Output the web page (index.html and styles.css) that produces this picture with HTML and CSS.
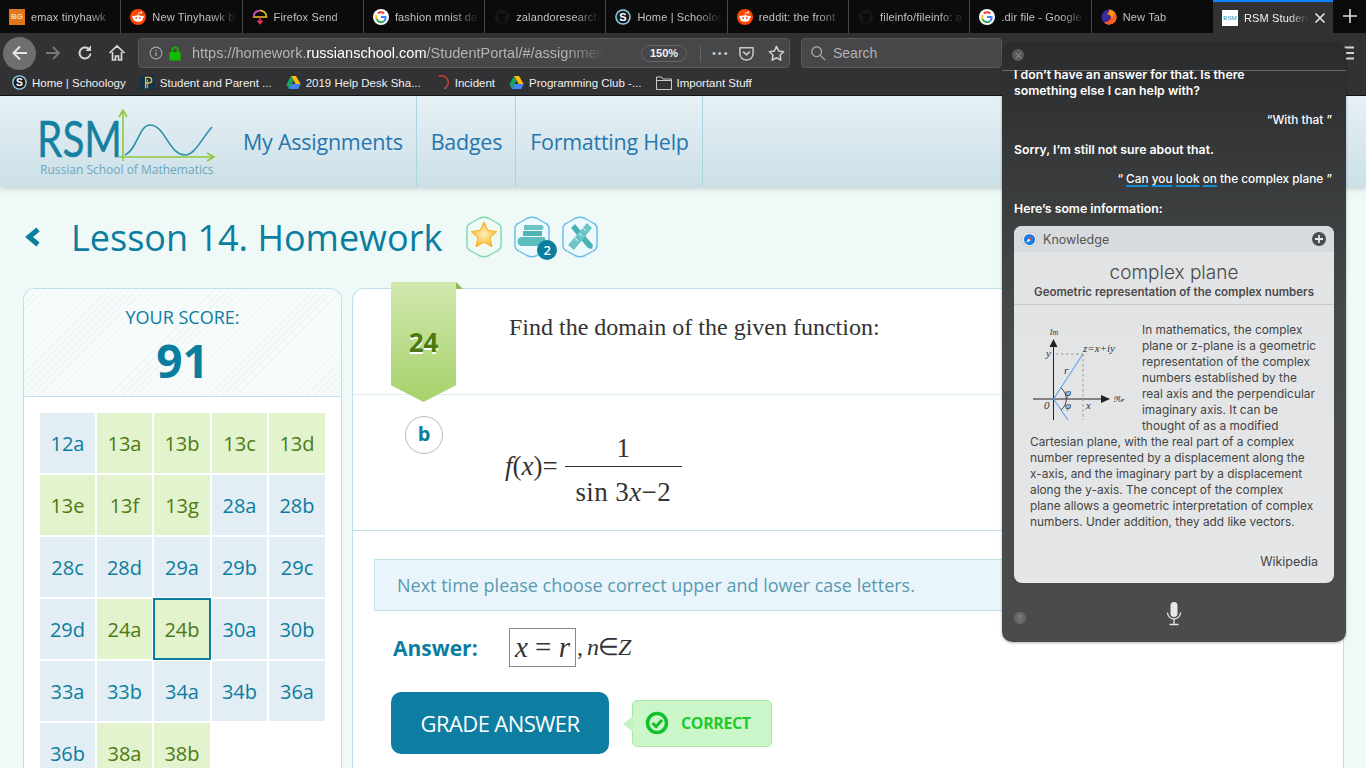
FILE: index.html
```html
<!DOCTYPE html>
<html lang="en">

<head>
    <meta charset="UTF-8">
    <title>RSM Student Portal</title>
    <link rel="stylesheet" href="styles.css">
</head>

<body>
    <svg class="defs" width="0" height="0">
        <symbol id="ico-google" viewBox="0 0 16 16">
            <circle cx="8" cy="8" r="8" fill="#fff"/>
            <path d="M8 3.2a4.8 4.8 0 0 1 3.2 1.2" fill="none" stroke="#ea4335" stroke-width="2"/>
            <path d="M4.8 4.4A4.8 4.8 0 0 1 8 3.2" fill="none" stroke="#ea4335" stroke-width="2"/>
            <path d="M3.6 10A4.8 4.8 0 0 1 3.6 6" fill="none" stroke="#fbbc05" stroke-width="2"/>
            <path d="M3.6 10a4.8 4.8 0 0 0 7.6 2" fill="none" stroke="#34a853" stroke-width="2"/>
            <path d="M8 8h4.6a4.8 4.8 0 0 1-1.4 4" fill="none" stroke="#4285f4" stroke-width="2"/>
        </symbol>
        <symbol id="ico-reddit" viewBox="0 0 16 16">
            <circle cx="8" cy="8" r="8" fill="#ff4500"/>
            <ellipse cx="8" cy="9.5" rx="4.8" ry="3.3" fill="#fff"/>
            <circle cx="3.4" cy="8" r="1.2" fill="#fff"/>
            <circle cx="12.6" cy="8" r="1.2" fill="#fff"/>
            <circle cx="11.2" cy="3.6" r="1" fill="#fff"/>
            <path d="M8 6.4 8.6 3.6l2.4.2" fill="none" stroke="#fff" stroke-width=".7"/>
            <circle cx="6.2" cy="9" r=".9" fill="#ff4500"/>
            <circle cx="9.8" cy="9" r=".9" fill="#ff4500"/>
        </symbol>
        <symbol id="ico-github" viewBox="0 0 16 16">
            <circle cx="8" cy="8" r="7.5" fill="#161616"/>
            <path d="M4.5 5 5 3.6l1.8.8h2.4L11 3.6l.5 1.4c.6 1.5.3 3.2-1.3 3.8.4.4.5 1 .5 2v3H5.300v-3c0-1 .1-1.600.5-2C4.200 8.200 3.900 6.500 4.500 5z" fill="#0b0b0b"/>
        </symbol>
        <symbol id="ico-schoology" viewBox="0 0 16 16">
            <circle cx="8" cy="8" r="7.800" fill="#8fd3ee"/>
            <circle cx="8" cy="8" r="6.300" fill="#1a1a1c"/>
            <text x="8" y="11.600" text-anchor="middle" class="ico-s">S</text>
        </symbol>
        <symbol id="ico-drive" viewBox="0 0 16 14">
            <path d="M5.300 0h5.400l5 8.700h-5.400z" fill="#fbbc05"/>
            <path d="M5.300 0 .3 9.200 3 14l5-8.800z" fill="#1aa260"/>
            <path d="M3 14h10.200l2.500-5.300H5.800z" fill="#4285f4"/>
        </symbol>
    </svg>

    <div class="tabbar">
        <div class="tab">
            <span class="favicon fav-bg">BG</span>
            <span class="tab-title">emax tinyhawk</span>
        </div>
        <div class="tab">
            <svg class="favicon"><use href="#ico-reddit"/></svg>
            <span class="tab-title">New Tinyhawk bl</span>
        </div>
        <div class="tab">
            <svg class="favicon" viewBox="0 0 16 16">
                <path d="M1.500 8a6.500 6.500 0 0 1 13 0z" fill="none" stroke="#f5c518" stroke-width="1.600"/>
                <path d="M1.500 8a6.500 6.500 0 0 1 6.500-6.500" fill="none" stroke="#c13adf" stroke-width="1.600"/>
                <path d="M8 8v6M5.500 11.500 8 14.500l2.500-3" fill="none" stroke="#f0325c" stroke-width="1.600"/>
            </svg>
            <span class="tab-title">Firefox Send</span>
        </div>
        <div class="tab">
            <svg class="favicon"><use href="#ico-google"/></svg>
            <span class="tab-title">fashion mnist da</span>
        </div>
        <div class="tab">
            <svg class="favicon"><use href="#ico-github"/></svg>
            <span class="tab-title">zalandoresearch</span>
        </div>
        <div class="tab">
            <svg class="favicon"><use href="#ico-schoology"/></svg>
            <span class="tab-title">Home | Schoolog</span>
        </div>
        <div class="tab">
            <svg class="favicon"><use href="#ico-reddit"/></svg>
            <span class="tab-title">reddit: the front</span>
        </div>
        <div class="tab">
            <svg class="favicon"><use href="#ico-github"/></svg>
            <span class="tab-title">fileinfo/fileinfo: a</span>
        </div>
        <div class="tab">
            <svg class="favicon"><use href="#ico-google"/></svg>
            <span class="tab-title">.dir file - Google</span>
        </div>
        <div class="tab">
            <svg class="favicon" viewBox="0 0 16 16">
                <circle cx="8" cy="8" r="7.500" fill="#3b2a9c"/>
                <path d="M8 .5a7.500 7.500 0 0 1 7.500 7.500A7.500 7.500 0 0 1 3 13.600C6 14 10 12 10 8.500 10 6 8 5 6 5.500 7 3.500 8.500 3 8 .5z" fill="#ff9500"/>
                <path d="M15.500 8A7.500 7.500 0 0 1 3 13.600c3 .2 6-1.500 7-5 2 0 3-1.500 2.500-4 1.800.9 3 1.800 3 3.400z" fill="#ff5a1f"/>
            </svg>
            <span class="tab-title">New Tab</span>
        </div>
        <div class="tab tab-active">
            <span class="favicon fav-rsm">RSM</span>
            <span class="tab-title">RSM Student</span>
            <svg class="tab-close" viewBox="0 0 12 12"><path d="M1.500 1.500l9 9M10.500 1.500l-9 9" stroke="#eee" stroke-width="1.500"/></svg>
        </div>
        <svg class="tab-new" viewBox="0 0 14 14"><path d="M7 0v14M0 7h14" stroke="#ddd" stroke-width="1.600"/></svg>
    </div>

    <div class="navbar">
        <div class="back-btn">
            <svg viewBox="0 0 18 18"><path d="M16 9H3M9 2.500 2.500 9 9 15.500" fill="none" stroke="#e4e4e4" stroke-width="2"/></svg>
        </div>
        <svg class="nav-ico nav-fwd" viewBox="0 0 18 18"><path d="M2 9h13M9 3l6 6-6 6" fill="none" stroke="#77777a" stroke-width="1.800"/></svg>
        <svg class="nav-ico" viewBox="0 0 18 18"><path d="M14.500 9.500A5.500 5.500 0 1 1 12.500 4.700" fill="none" stroke="#d8d8d8" stroke-width="2"/><path d="M15 1.500v5.500H9.500z" fill="#d8d8d8"/></svg>
        <svg class="nav-ico" viewBox="0 0 18 18"><path d="M1.500 9 9 2l7.500 7M4.500 8v8h3v-4h3v4h3V8" fill="none" stroke="#d8d8d8" stroke-width="1.700"/></svg>
        <div class="urlbar">
            <svg class="url-info" viewBox="0 0 16 16"><circle cx="8" cy="8" r="6.700" fill="none" stroke="#a9a9ab" stroke-width="1.200"/><path d="M8 7v4.500M8 4.200v1.400" stroke="#a9a9ab" stroke-width="1.500"/></svg>
            <svg class="url-lock" viewBox="0 0 12 16"><path d="M3 7V4.500a3 3 0 0 1 6 0V7" fill="none" stroke="#12bc00" stroke-width="1.800"/><rect y="6.500" width="12" height="9" rx="1" fill="#12bc00"/></svg>
            <span class="url-text">https://homework.<b>russianschool.com</b>/StudentPortal/#/assignments</span>
            <span class="zoom-pill">150%</span>
            <span class="url-sep"></span>
            <span class="url-dots">•••</span>
            <svg class="url-ico" viewBox="0 0 18 18"><path d="M2 3h14v6a7 7 0 0 1-14 0z" fill="none" stroke="#c8c8c8" stroke-width="1.600" stroke-linejoin="round"/><path d="M5.500 7 9 10.500 12.500 7" fill="none" stroke="#c8c8c8" stroke-width="1.800"/></svg>
            <svg class="url-ico" viewBox="0 0 18 18"><path d="M9 1.500l2.300 4.900 5.200.7-3.800 3.700.9 5.300L9 13.500l-4.600 2.600.9-5.300L1.500 7.100l5.200-.7z" fill="none" stroke="#d0d0d0" stroke-width="1.600" stroke-linejoin="round"/></svg>
        </div>
        <div class="searchbar">
            <svg viewBox="0 0 18 18"><circle cx="7.500" cy="7.500" r="5.500" fill="none" stroke="#a5a5a7" stroke-width="1.500"/><path d="M11.500 11.500 17 17" stroke="#a5a5a7" stroke-width="1.500"/></svg>
            <span>Search</span>
        </div>
        <svg class="hamburger" viewBox="0 0 10 14"><path d="M0 1.500h10M0 7h10M0 12.500h10" stroke="#d5d5d5" stroke-width="2"/></svg>
    </div>

    <div class="bookmarks">
        <div class="bm">
            <svg class="bm-ico"><use href="#ico-schoology"/></svg>
            <span>Home | Schoology</span>
        </div>
        <div class="bm">
            <svg class="bm-ico" viewBox="0 0 16 16">
                <rect width="16" height="16" fill="#173447"/>
                <path d="M6 14V2.500h3.500a3 3 0 0 1 0 6H6" fill="none" stroke="#e8b93a" stroke-width="1.400"/>
                <path d="M8 14V5" stroke="#4fc0c8" stroke-width="1.200"/>
            </svg>
            <span>Student and Parent ...</span>
        </div>
        <div class="bm">
            <svg class="bm-ico bm-drive"><use href="#ico-drive"/></svg>
            <span>2019 Help Desk Sha...</span>
        </div>
        <div class="bm">
            <svg class="bm-ico" viewBox="0 0 16 16"><path d="M4 1.500a6.700 6.700 0 0 1 6 13" fill="none" stroke="#d6402c" stroke-width="1.500"/><path d="M10 14.500a6.700 6.700 0 0 0 2-1.300" fill="none" stroke="#2f8f9c" stroke-width="1.500"/></svg>
            <span>Incident</span>
        </div>
        <div class="bm">
            <svg class="bm-ico bm-drive"><use href="#ico-drive"/></svg>
            <span>Programming Club -...</span>
        </div>
        <div class="bm">
            <svg class="bm-ico bm-folder" viewBox="0 0 16 14"><path d="M.5 13.500V1h5l1.500 2h8.500v10.500zM.5 4.500h15" fill="none" stroke="#c9c9c9"/></svg>
            <span>Important Stuff</span>
        </div>
    </div>

    <header class="site-header">
        <div class="logo">
            <svg class="logo-mark" viewBox="0 0 180 54">
                <path d="M86 53V3M82 9l4-7 4 7" fill="none" stroke="#93c83e" stroke-width="1.600"/>
                <path d="M82 49h94M170 45l7 4-7 4" fill="none" stroke="#93c83e" stroke-width="1.600"/>
                <path d="M88 47C100 42 102 17 113 17 128 17 132 47 148 47 158 47 165 30 175 19" fill="none" stroke="#2f8fae" stroke-width="1.600"/>
                <text x="0" y="49" class="logo-rsm" textLength="85" lengthAdjust="spacingAndGlyphs">RSM</text>
            </svg>
            <div class="logo-sub">Russian School of Mathematics</div>
        </div>
        <nav class="main-nav">
            <a>My Assignments</a>
            <a>Badges</a>
            <a>Formatting Help</a>
        </nav>
    </header>

    <div class="title-row">
        <svg class="title-back" viewBox="0 0 16 20"><path d="M13 2.500 4 10l9 7.500" fill="none" stroke="#0b7d9f" stroke-width="5"/></svg>
        <h1>Lesson 14. Homework</h1>
        <div class="badges">
            <svg class="badge" viewBox="0 0 38 44">
                <path d="M14 3.500Q19 1 24 3.500L33 8.500Q36 10 36 14V30Q36 34 33 35.500L24 40.500Q19 43 14 40.500L5 35.500Q2 34 2 30V14Q2 10 5 8.500Z" fill="#f0faf5" stroke="#7fd8ae" stroke-width="1.400"/>
                <defs><radialGradient id="star"><stop offset="0" stop-color="#fff2b8"/><stop offset="1" stop-color="#f8b62c"/></radialGradient></defs>
                <path d="M19 7l3.900 8.300 9.100 1.200-6.700 6.300 1.700 9L19 27.300l-8 4.500 1.700-9L6 16.500l9.100-1.200z" fill="url(#star)" stroke="#f5b335" stroke-linejoin="round"/>
            </svg>
            <div class="badge-wrap">
                <svg class="badge" viewBox="0 0 38 44">
                    <path d="M14 3.500Q19 1 24 3.500L33 8.500Q36 10 36 14V30Q36 34 33 35.500L24 40.500Q19 43 14 40.500L5 35.500Q2 34 2 30V14Q2 10 5 8.500Z" fill="#eef9fb" stroke="#66bde6" stroke-width="1.400"/>
                    <path d="M11 10h17a2 2 0 0 1 0 5H11z" fill="#6cc3c6"/>
                    <path d="M10 16h19v5H10z" fill="#4fb2b6"/>
                    <path d="M9 22h21a2.500 2.500 0 0 1 0 5v4H9a4 4 0 0 1 0-9z" fill="#5dbcbe"/>
                </svg>
                <span class="badge-count">2</span>
            </div>
            <svg class="badge" viewBox="0 0 38 44">
                <path d="M14 3.500Q19 1 24 3.500L33 8.500Q36 10 36 14V30Q36 34 33 35.500L24 40.500Q19 43 14 40.500L5 35.500Q2 34 2 30V14Q2 10 5 8.500Z" fill="#eef9fb" stroke="#66bde6" stroke-width="1.400"/>
                <path d="M10 13l4-4 18 21-1 4-4-1z" fill="#4ab2b6"/>
                <path d="M26 8l5 5-18 22-6-5z" fill="#6dc5c8"/>
                <path d="M22 13l3 3M18 18l3 3M14 23l3 3" stroke="#eef9fb"/>
            </svg>
        </div>
    </div>

    <div class="columns">
        <aside class="score-card">
            <div class="score-head">
                <div class="score-label">YOUR SCORE:</div>
                <div class="score-value">91</div>
            </div>
            <div class="problem-grid">
                <a class="cell">12a</a>
                <a class="cell done">13a</a>
                <a class="cell done">13b</a>
                <a class="cell done">13c</a>
                <a class="cell done">13d</a>
                <a class="cell done">13e</a>
                <a class="cell done">13f</a>
                <a class="cell done">13g</a>
                <a class="cell">28a</a>
                <a class="cell">28b</a>
                <a class="cell">28c</a>
                <a class="cell">28d</a>
                <a class="cell">29a</a>
                <a class="cell">29b</a>
                <a class="cell">29c</a>
                <a class="cell">29d</a>
                <a class="cell done">24a</a>
                <a class="cell done current">24b</a>
                <a class="cell">30a</a>
                <a class="cell">30b</a>
                <a class="cell">33a</a>
                <a class="cell">33b</a>
                <a class="cell">34a</a>
                <a class="cell">34b</a>
                <a class="cell">36a</a>
                <a class="cell">36b</a>
                <a class="cell done">38a</a>
                <a class="cell done">38b</a>
            </div>
        </aside>

        <main class="problem-card">
            <div class="ribbon-wrap">
                <span class="ribbon-fold"></span>
                <div class="ribbon"><span>24</span></div>
            </div>
            <section class="question">Find the domain of the given function:</section>
            <section class="formula">
                <div class="part-mark">b</div>
                <div class="math">
                    <span class="math-lhs"><i>f</i>(<i>x</i>)=</span>
                    <span class="frac">
                        <span class="frac-top">1</span>
                        <span class="frac-bot">sin 3<i>x</i>−2</span>
                    </span>
                </div>
            </section>
            <section class="answer-area">
                <div class="hint">Next time please choose correct upper and lower case letters.</div>
                <div class="answer-row">
                    <span class="answer-label">Answer:</span>
                    <span class="answer-box"><i>x</i> = <i>r</i></span>
                    <span class="answer-rest">, <i>n</i>∈<i>Z</i></span>
                </div>
                <div class="grade-row">
                    <button class="grade-btn">GRADE ANSWER</button>
                    <div class="correct">
                        <svg viewBox="0 0 24 24"><circle cx="12" cy="12" r="9.500" fill="none" stroke="#10c02c" stroke-width="3.500"/><path d="M7.500 12l3.500 3.500 6-6.500" fill="none" stroke="#10c02c" stroke-width="3"/></svg>
                        <span>CORRECT</span>
                    </div>
                </div>
            </section>
        </main>
    </div>

    <div class="siri">
        <div class="siri-top">
            <span class="siri-close">
                <svg viewBox="0 0 8 8"><path d="M1 1l6 6M7 1 1 7" stroke="#a5a5a5"/></svg>
            </span>
        </div>
        <div class="siri-body">
            <p class="siri-say siri-first">I don’t have an answer for that. Is there something else I can help with?</p>
            <p class="siri-you">“With that ”</p>
            <p class="siri-say">Sorry, I’m still not sure about that.</p>
            <p class="siri-you">“ <u>Can</u> <u>you</u> <u>look</u> <u>on</u> the complex plane ”</p>
            <p class="siri-say siri-last">Here’s some information:</p>

            <div class="know-card">
                <div class="know-head">
                    <svg class="safari" viewBox="0 0 16 16">
                        <circle cx="8" cy="8" r="7.500" fill="#fff" stroke="#aaa" stroke-width=".6"/>
                        <circle cx="8" cy="8" r="6" fill="#1b7fe0"/>
                        <path d="M11.500 4.500 7 7l2 2z" fill="#ee3b30"/>
                        <path d="M4.500 11.500 7 7l2 2z" fill="#fff"/>
                    </svg>
                    <span class="know-title">Knowledge</span>
                    <svg class="know-plus" viewBox="0 0 14 14"><circle cx="7" cy="7" r="7" fill="#4b4d4f"/><path d="M7 3v8M3 7h8" stroke="#e6e7e8" stroke-width="1.800"/></svg>
                </div>
                <div class="know-name">
                    <h2>complex plane</h2>
                    <h3>Geometric representation of the complex numbers</h3>
                </div>
                <div class="know-text">
                    <svg class="plane-fig" viewBox="0 0 100 104">
                        <path d="M23.500 98V24" stroke="#222" stroke-width="1"/>
                        <path d="M23.500 17l-4 8h8z" fill="#222"/>
                        <path d="M3 77h69" stroke="#222" stroke-width="1"/>
                        <path d="M80 77l-9-4v8z" fill="#222"/>
                        <path d="M23.500 77 53 32M23.500 77 38 98" stroke="#6aa5ec" stroke-width="1.200" fill="none"/>
                        <path d="M26 32h27M53 32v66" stroke="#999" stroke-dasharray="2.500 2.500" fill="none"/>
                        <path d="M31 66a14 14 0 0 1 0 22" stroke="#444" fill="none"/>
                        <text x="24" y="13" class="fig-lab fig-small" text-anchor="middle">Im</text>
                        <text x="53" y="30" class="fig-lab">z=x+iy</text>
                        <text x="16" y="35" class="fig-lab">y</text>
                        <text x="34" y="52" class="fig-lab">r</text>
                        <text x="35" y="74" class="fig-lab">φ</text>
                        <text x="35" y="87" class="fig-lab">φ</text>
                        <text x="14" y="87" class="fig-lab">0</text>
                        <text x="56" y="87" class="fig-lab">x</text>
                        <text x="83" y="80" class="fig-lab fig-small">ℜℯ</text>
                    </svg>
                    In mathematics, the complex plane or z-plane is a geometric representation of the complex numbers established by the real axis and the perpendicular imaginary axis. It can be thought of as a modified Cartesian plane, with the real part of a complex number represented by a displacement along the <span class="nowrap">x-axis,</span> and the imaginary part by a displacement along the <span class="nowrap">y-axis.</span> The concept of the complex<br>plane allows a geometric interpretation of complex numbers. Under addition, they add like vectors.
                </div>
                <div class="know-src">Wikipedia</div>
            </div>
        </div>
        <div class="siri-foot">
            <span class="siri-help">?</span>
            <svg class="siri-mic" viewBox="0 0 16 24">
                <rect x="4.500" y="0" width="7" height="15" rx="3.500" fill="#e8e8e8"/>
                <path d="M1.500 10.500a6.500 6.500 0 0 0 13 0M8 17v5M3.500 22.500h9" fill="none" stroke="#e8e8e8" stroke-width="1.300"/>
            </svg>
        </div>
    </div>
</body>

</html>
```

FILE: styles.css
```css
* {
    box-sizing: border-box;
}

html,
body {
    height: 768px;
    overflow: hidden;
}

body {
    margin: 0;
    background-color: #eff9f8;
    font-family: "Open Sans", "Liberation Sans", sans-serif;
    color: #0b7d9f;
}

.defs {
    display: block;
    height: 0;
}

.ico-s {
    font: bold 11px "Liberation Sans", sans-serif;
    fill: #fff;
}

/* browser tabs */
.tabbar {
    display: flex;
    align-items: stretch;
    height: 33px;
    background-color: #0b0b0c;
    font-family: "Liberation Sans", sans-serif;
    font-size: 11px;
    letter-spacing: 0.15px;
}

.tab {
    display: flex;
    align-items: center;
    gap: 6px;
    width: 121.3px;
    padding: 0 5px 0 9px;
    margin: 0;
    border-right: 1px solid #4a4a4c;
    color: #c2c2c4;
    white-space: nowrap;
}

.tab:nth-child(10) {
    border-right: none;
}

.favicon {
    flex: none;
    width: 16px;
    height: 16px;
}

.fav-bg {
    background-color: #e2761b;
    color: #f6d9b6;
    font-size: 8px;
    font-weight: bold;
    letter-spacing: 0;
    line-height: 16px;
    text-align: center;
}

.fav-rsm {
    background-color: #fff;
    color: #1b86a8;
    font-family: "Liberation Serif", serif;
    font-size: 6.500px;
    letter-spacing: 0;
    line-height: 16px;
    text-align: center;
}

.tab-title {
    flex: 1;
    overflow: hidden;
    -webkit-mask-image: linear-gradient(to right, #000 70%, transparent 100%);
    mask-image: linear-gradient(to right, #000 70%, transparent 100%);
}

.tab-active {
    width: 120px;
    padding-left: 9px;
    background-color: #323234;
    border-top: 2px solid #0a84ff;
    border-right: none;
    color: #f2f2f2;
}

.tab-close {
    flex: none;
    width: 12px;
    height: 12px;
    margin-right: 2px;
}

.tab-new {
    width: 14px;
    height: 14px;
    margin: 9px 0 0 10px;
}

/* browser toolbar */
.navbar {
    display: flex;
    align-items: center;
    height: 36px;
    padding: 4px 0 0 3px;
    background-color: #323234;
    font-family: "Liberation Sans", sans-serif;
}

.back-btn {
    display: flex;
    align-items: center;
    justify-content: center;
    flex: none;
    width: 33px;
    height: 33px;
    border-radius: 50%;
    background-color: #6f6f71;
}

.back-btn svg {
    width: 18px;
    height: 18px;
}

.nav-ico {
    flex: none;
    width: 18px;
    height: 18px;
    margin-left: 14px;
}

.nav-fwd {
    margin-left: 8px;
}

.urlbar {
    display: flex;
    align-items: center;
    flex: none;
    width: 652px;
    height: 30px;
    margin-left: 12px;
    padding: 0 5px 0 10px;
    background-color: #474749;
    border: 1px solid #5a5a5c;
    border-radius: 4px;
}

.url-info {
    flex: none;
    width: 14px;
    height: 14px;
}

.url-lock {
    flex: none;
    width: 12px;
    height: 15px;
    margin-left: 6px;
}

.url-text {
    flex: none;
    width: 414px;
    margin-left: 11px;
    overflow: hidden;
    color: #b4b4b6;
    font-size: 14.500px;
    white-space: nowrap;
    -webkit-mask-image: linear-gradient(to right, #000 90%, transparent 100%);
    mask-image: linear-gradient(to right, #000 90%, transparent 100%);
}

.url-text b {
    color: #fff;
    font-weight: normal;
}

.zoom-pill {
    flex: none;
    width: 46px;
    height: 17px;
    margin-left: 35px;
    border: 1px solid #666;
    border-radius: 9px;
    color: #f0f0f0;
    font-size: 11px;
    font-weight: bold;
    line-height: 15px;
    text-align: center;
}

.url-sep {
    flex: none;
    width: 1px;
    height: 17px;
    margin-left: 13px;
    background-color: #646466;
}

.url-dots {
    flex: none;
    margin: 0 -5px 0 11px;
    color: #c8c8c8;
    font-size: 11px;
    letter-spacing: 2px;
}

.url-ico {
    flex: none;
    width: 17px;
    height: 17px;
    margin-left: 13px;
}

.searchbar {
    display: flex;
    align-items: center;
    gap: 7px;
    flex: none;
    width: 201px;
    height: 30px;
    margin-left: 11px;
    padding-left: 8px;
    background-color: #474749;
    border: 1px solid #5a5a5c;
    border-radius: 4px;
    color: #b0b0b2;
    font-size: 14px;
}

.searchbar svg {
    width: 16px;
    height: 16px;
}

.hamburger {
    flex: none;
    width: 10px;
    height: 14px;
    margin-left: 342px;
}

/* bookmarks */
.bookmarks {
    display: flex;
    align-items: center;
    gap: 14px;
    height: 27px;
    padding: 1px 0 0 12px;
    background-color: #323234;
    border-bottom: 1px solid #0c0c0c;
    color: #f0f0f0;
    font-family: "Liberation Sans", sans-serif;
    font-size: 11.5px;
    white-space: nowrap;
}

.bm {
    display: flex;
    align-items: center;
    gap: 5px;
}

.bm-ico {
    flex: none;
    width: 15px;
    height: 15px;
}

.bm-drive {
    height: 13px;
}

.bm-folder {
    width: 16px;
    height: 14px;
}

/* site header */
.site-header {
    display: flex;
    height: 90px;
    padding-left: 37px;
    background: linear-gradient(#e6f1f5, #cce0e8);
    box-shadow: 0 2px 6px rgba(90, 120, 130, 0.35);
}

.logo {
    flex: none;
    width: 206px;
    padding-top: 12px;
}

.logo-mark {
    display: block;
    width: 180px;
    height: 54px;
}

.logo-rsm {
    font-family: "Lato", sans-serif;
    font-size: 50px;
    fill: #15809f;
    stroke: #15809f;
    stroke-width: 0.4px;
}

.logo-sub {
    margin: 0 0 0 3px;
    color: #6ea6bb;
    font-size: 12px;
    line-height: 16px;
    white-space: nowrap;
}

.main-nav {
    display: flex;
}

.main-nav a {
    display: flex;
    align-items: center;
    height: 90px;
    padding: 0 13px 0 14px;
    border-right: 1px solid #a9d4e0;
    color: #2776ad;
    font-size: 21.500px;
    letter-spacing: -0.25px;
}

.main-nav a:first-child {
    padding-left: 0;
}

/* title */
.title-row {
    display: flex;
    align-items: center;
    height: 102px;
    padding-left: 25px;
}

.title-back {
    flex: none;
    width: 16px;
    height: 20px;
}

h1 {
    margin: 0 0 0 30px;
    color: #0b7d9f;
    font-size: 36px;
    font-weight: 400;
    white-space: nowrap;
}

.badges {
    display: flex;
    align-items: center;
    gap: 10px;
    margin-left: 23px;
}

.badge {
    display: block;
    width: 38px;
    height: 44px;
}

.badge-wrap {
    position: relative;
}

.badge-count {
    position: absolute;
    right: -6px;
    bottom: -1px;
    width: 20px;
    height: 20px;
    border-radius: 50%;
    background-color: #0b7d9f;
    color: #fff;
    font-size: 13px;
    font-weight: 600;
    line-height: 20px;
    text-align: center;
}

/* two columns */
.columns {
    display: flex;
    align-items: flex-start;
    gap: 10px;
    padding-left: 23px;
}

.score-card {
    flex: none;
    width: 319px;
    height: 480px;
    background-color: #fff;
    border: 1px solid #bfe0ea;
    border-bottom: none;
    border-radius: 12px 12px 0 0;
    overflow: hidden;
}

.score-head {
    height: 108px;
    padding-top: 15px;
    border-bottom: 1px solid #bfe0ea;
    background: repeating-linear-gradient(-45deg, #f7fbfb 0, #f7fbfb 4px, #eef5f5 4px, #eef5f5 5px);
    text-align: center;
}

.score-label {
    font-size: 18px;
    line-height: 26px;
}

.score-value {
    color: #0b7d9f;
    font-size: 46px;
    font-weight: 700;
    line-height: 60px;
}

.problem-grid {
    display: grid;
    grid-template-columns: 55px 55px 56px 55px 56px;
    grid-auto-rows: 60px;
    gap: 2px;
    padding: 16px 0 0 16px;
}

.cell {
    display: flex;
    align-items: center;
    justify-content: center;
    background-color: #e3eef4;
    color: #0b7d9f;
    font-size: 20px;
}

.cell.done {
    background-color: #e2f3cd;
    color: #4e7a12;
}

.cell.current {
    box-shadow: 0 0 0 1px #0b7d9f, inset 0 0 0 1px #0b7d9f;
}

.problem-card {
    position: relative;
    flex: none;
    width: 992px;
    height: 480px;
    background-color: #fff;
    border: 1px solid #bfe0ea;
    border-bottom: none;
    border-radius: 12px 12px 0 0;
    color: #333;
}

.ribbon-wrap {
    position: absolute;
    top: -7px;
    left: 38px;
    width: 72px;
    height: 120px;
}

.ribbon {
    display: flex;
    align-items: center;
    justify-content: center;
    width: 65px;
    height: 120px;
    background: linear-gradient(#d2e8ae, #a6d26b);
    clip-path: polygon(0 0, 100% 0, 100% 86%, 50% 100%, 0 86%);
}

.ribbon span {
    margin-bottom: 1px;
    color: #4a7a10;
    font-size: 26px;
    font-weight: 700;
    text-shadow: 0 2px 0 #fff;
}

.ribbon-fold {
    position: absolute;
    top: 0;
    left: 65px;
    width: 0;
    height: 0;
    border-top: 7px solid transparent;
    border-left: 7px solid #8fb95a;
}

.question {
    height: 106px;
    padding: 22px 0 0 156px;
    border-bottom: 1px solid #dcf0f5;
    font-family: "Liberation Serif", serif;
    font-size: 24px;
    line-height: 32px;
}

.formula {
    position: relative;
    height: 136px;
    border-bottom: 1px solid #bfe0ea;
}

.part-mark {
    position: absolute;
    top: 21px;
    left: 52px;
    width: 38px;
    height: 38px;
    border: 1px solid #bbb;
    border-radius: 50%;
    color: #0b7d9f;
    font-size: 20px;
    font-weight: 700;
    line-height: 34px;
    text-align: center;
}

.math {
    display: flex;
    align-items: center;
    gap: 7px;
    padding: 34px 0 0 152px;
    font-family: "Liberation Serif", serif;
    font-size: 27px;
}

.math-lhs {
    margin-top: -14px;
}

.frac {
    display: flex;
    flex-direction: column;
    align-items: center;
    width: 117px;
}

.frac-top {
    width: 100%;
    height: 38px;
    border-bottom: 1px solid #333;
    line-height: 38px;
    text-align: center;
}

.frac-bot {
    height: 50px;
    letter-spacing: 0.4px;
    line-height: 50px;
}

.answer-area {
    padding: 28px 0 0 21px;
}

.hint {
    width: 948px;
    height: 52px;
    padding-left: 22px;
    background-color: #e9f5fb;
    border: 1px solid #c2e2ea;
    color: #5a9ab0;
    font-size: 18px;
    line-height: 50px;
}

.answer-row {
    display: flex;
    align-items: center;
    height: 39px;
    margin-top: 17px;
    padding-left: 19px;
    font-family: "Liberation Serif", serif;
}

.answer-label {
    width: 116px;
    color: #0b7d9f;
    font-family: "Open Sans", sans-serif;
    font-size: 21px;
    font-weight: 700;
}

.answer-box {
    width: 67px;
    height: 39px;
    border: 1px solid #888;
    font-size: 29px;
    line-height: 37px;
    text-align: center;
    white-space: nowrap;
}

.answer-rest {
    margin: -2px 0 0 1px;
    font-size: 24px;
    letter-spacing: -1px;
}

.grade-row {
    display: flex;
    align-items: center;
    gap: 23px;
    margin: 25px 0 0 17px;
}

.grade-btn {
    width: 218px;
    height: 62px;
    background-color: #0d7da1;
    border: none;
    border-radius: 10px;
    color: #fff;
    font-family: "Open Sans", sans-serif;
    font-size: 22px;
    letter-spacing: -0.6px;
}

.correct {
    position: relative;
    display: flex;
    align-items: center;
    gap: 12px;
    width: 140px;
    height: 47px;
    padding-left: 12px;
    background-color: #caf6c9;
    border: 1px solid #a5eba6;
    border-radius: 5px;
    color: #1fc92f;
    font-size: 16px;
    font-weight: 700;
    letter-spacing: -0.4px;
}

.correct svg {
    flex: none;
    width: 24px;
    height: 24px;
}

.correct::before {
    content: "";
    position: absolute;
    top: 15px;
    left: -10px;
    width: 0;
    height: 0;
    border-top: 8px solid transparent;
    border-bottom: 8px solid transparent;
    border-right: 10px solid #c5f2c4;
}

/* assistant window, floats over the browser */
.siri {
    position: absolute;
    top: 42px;
    left: 1002px;
    width: 344px;
    height: 600px;
    background: linear-gradient(#2a2b2c, #46494a 45%, #4a4b4c);
    border-radius: 10px;
    color: #fff;
    font-family: "Inter", "Liberation Sans", sans-serif;
    font-size: 12px;
    overflow: hidden;
    box-shadow: 0 1px 3px rgba(0, 0, 0, 0.3);
}

.siri-top {
    height: 29px;
    padding: 7px 0 0 10px;
    border-bottom: 1px solid #6a6c6d;
}

.siri-close {
    display: flex;
    align-items: center;
    justify-content: center;
    width: 12px;
    height: 12px;
    border-radius: 50%;
    background-color: #58595a;
}

.siri-close svg {
    width: 7px;
    height: 7px;
}

.siri-body {
    margin-top: -4px;
    padding: 0 12px;
}

.siri-say {
    margin: 0 0 13px;
    font-size: 12.300px;
    font-weight: 600;
    line-height: 16px;
}

.siri-first {
    width: 250px;
}

.siri-last {
    margin-bottom: 9px;
}

.siri-you {
    margin: 0 2px 14px 0;
    font-size: 11.800px;
    font-weight: 500;
    line-height: 16px;
    text-align: right;
}

.siri-you u {
    text-decoration-color: #1a8ad4;
    text-decoration-thickness: 1.500px;
    text-underline-offset: 2px;
}

.know-card {
    width: 320px;
    height: 357px;
    background: linear-gradient(#e2e3e4, #e4e6e7);
    border-radius: 8px;
    color: #444;
}

.know-head {
    display: flex;
    align-items: center;
    height: 26px;
    padding: 0 8px;
    background-color: #d8dbdd;
    border-radius: 8px 8px 0 0;
}

.safari {
    flex: none;
    width: 15px;
    height: 15px;
}

.know-title {
    flex: 1;
    margin-left: 6px;
    color: #555;
    font-size: 12.500px;
}

.know-plus {
    flex: none;
    width: 14px;
    height: 14px;
}

.know-name {
    height: 53px;
    padding-top: 9px;
    border-bottom: 1px solid #c8cacb;
    text-align: center;
}

h2 {
    margin: 0;
    color: #4a4a4a;
    font-size: 19px;
    font-weight: 300;
    line-height: 23px;
}

h3 {
    margin: 1px 0 0;
    color: #4a4a4a;
    font-size: 11.500px;
    font-weight: 600;
    line-height: 14px;
}

.know-text {
    padding: 17px 16px 0 16px;
    font-size: 11.850px;
    line-height: 16px;
}

.nowrap {
    white-space: nowrap;
}

.plane-fig {
    float: left;
    width: 100px;
    height: 104px;
    margin: 0 12px 8px 0;
}

.fig-lab {
    font-family: "Liberation Serif", serif;
    font-size: 11px;
    font-style: italic;
    fill: #333;
}

.fig-small {
    font-size: 8px;
}

.know-src {
    margin-top: 24px;
    padding-right: 16px;
    color: #444;
    font-size: 12.500px;
    text-align: right;
}

.siri-foot {
    position: absolute;
    left: 0;
    right: 0;
    bottom: 0;
    height: 59px;
}

.siri-help {
    position: absolute;
    left: 12px;
    top: 29px;
    width: 12px;
    height: 12px;
    border-radius: 50%;
    background-color: #666869;
    color: #8a8b8c;
    font-size: 8px;
    font-weight: 700;
    line-height: 12px;
    text-align: center;
}

.siri-mic {
    position: absolute;
    left: 164px;
    top: 19px;
    width: 16px;
    height: 24px;
}
```
